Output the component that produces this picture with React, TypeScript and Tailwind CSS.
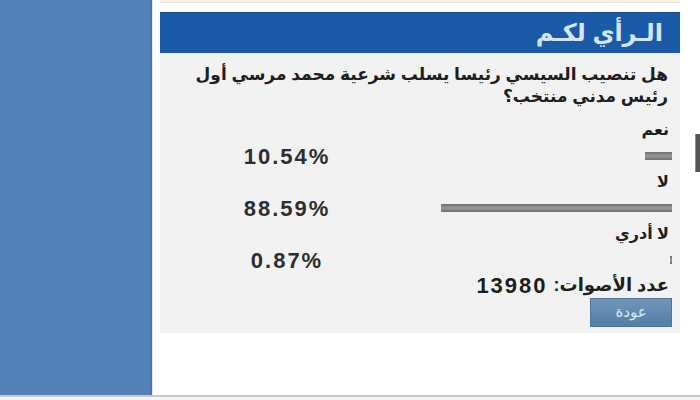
import React from "react";

const font = { fontFamily: '"Liberation Sans", "DejaVu Sans", Arial, sans-serif' };

function Bar({ pct }: { pct: number }) {
  return (
    <div className="flex h-[26px] items-center justify-end pr-[8px]">
      <div
        className="h-[8px] bg-gradient-to-b from-[#6f6f6f] via-[#9a9a9a] to-[#6f6f6f]"
        style={{ width: `${(261 * pct) / 100}px` }}
      />
    </div>
  );
}

function Pct({ v }: { v: string }) {
  return (
    <div className="flex h-[26px] items-center justify-center text-[22px] font-bold tracking-[2px] text-[#2e2e2e]" dir="ltr">
      {v}
    </div>
  );
}

function Label({ t }: { t: string }) {
  return (
    <div className="flex h-[26px] items-center justify-start pr-[11px] text-[16px] font-bold text-[#1e1e1e]">
      {t}
    </div>
  );
}

export default function App() {
  const options = [
    { t: "نعم", pct: 10.54, v: "10.54%" },
    { t: "لا", pct: 88.59, v: "88.59%" },
    { t: "لا أدري", pct: 0.87, v: "0.87%" },
  ];
  return (
    <div className="flex h-[400px] w-[700px] flex-col overflow-hidden bg-white" style={font}>
      <div className="flex h-[395px]">
        <div className="w-[152px] border-r-2 border-[#4a74a8] bg-[#5381b7]" />
        <div className="relative flex-1 border-l border-[#dde8f4] bg-white pl-[7px]">
          <div className="w-[520px]">
            <div className="h-[3px] border-b border-[#e6e1d6] bg-[#f6f1e4]" />
            <div className="mt-[9px] flex h-[41px] items-center justify-end border-t border-[#174f93] bg-[#1b5aa7] pr-[17px]" dir="rtl">
              <div className="w-full text-right text-[24px] font-bold text-[#d4e6f6]">الـرأي لكـم</div>
            </div>
            <div className="h-[280px] bg-[#f2f2f2] pt-[11px]" dir="rtl">
              <div className="pr-[12px] text-[17px] font-bold leading-[22px] text-[#1e1e1e]">
                <div className="whitespace-nowrap">هل تنصيب السيسي رئيسا يسلب شرعية محمد مرسي أول</div>
                <div className="whitespace-nowrap">رئيس مدني منتخب؟</div>
              </div>
              <div className="mt-[9px] grid grid-cols-[254px_266px]" dir="ltr">
                {options.map((o) => (
                  <React.Fragment key={o.t}>
                    <div />
                    <div dir="rtl">
                      <Label t={o.t} />
                    </div>
                    <Pct v={o.v} />
                    <Bar pct={o.pct} />
                  </React.Fragment>
                ))}
              </div>
              <div className="flex h-[24px] items-center pr-[11px] text-[#1e1e1e]">
                <span className="text-[18px] font-bold">عدد الأصوات:</span>
                <span className="mr-[6px] text-[22px] font-bold tracking-[2px]">13980</span>
              </div>
              <div className="mt-[1px] flex pr-[8px]">
                <button className="flex h-[29px] w-[82px] items-center justify-center border border-[#4f7599] bg-gradient-to-b from-[#7096ba] to-[#557ea5] text-[15px] text-[#dde8f2]">
                  عودة
                </button>
              </div>
            </div>
          </div>
          <div className="absolute right-0 top-[134px] h-[38px] w-[5px] border-l border-[#8a8a8a] bg-[#555]" />
        </div>
      </div>
      <div className="h-[2px] bg-[#c9c9c9]" />
      <div className="flex-1 bg-[#f4f4f4]" />
    </div>
  );
}
